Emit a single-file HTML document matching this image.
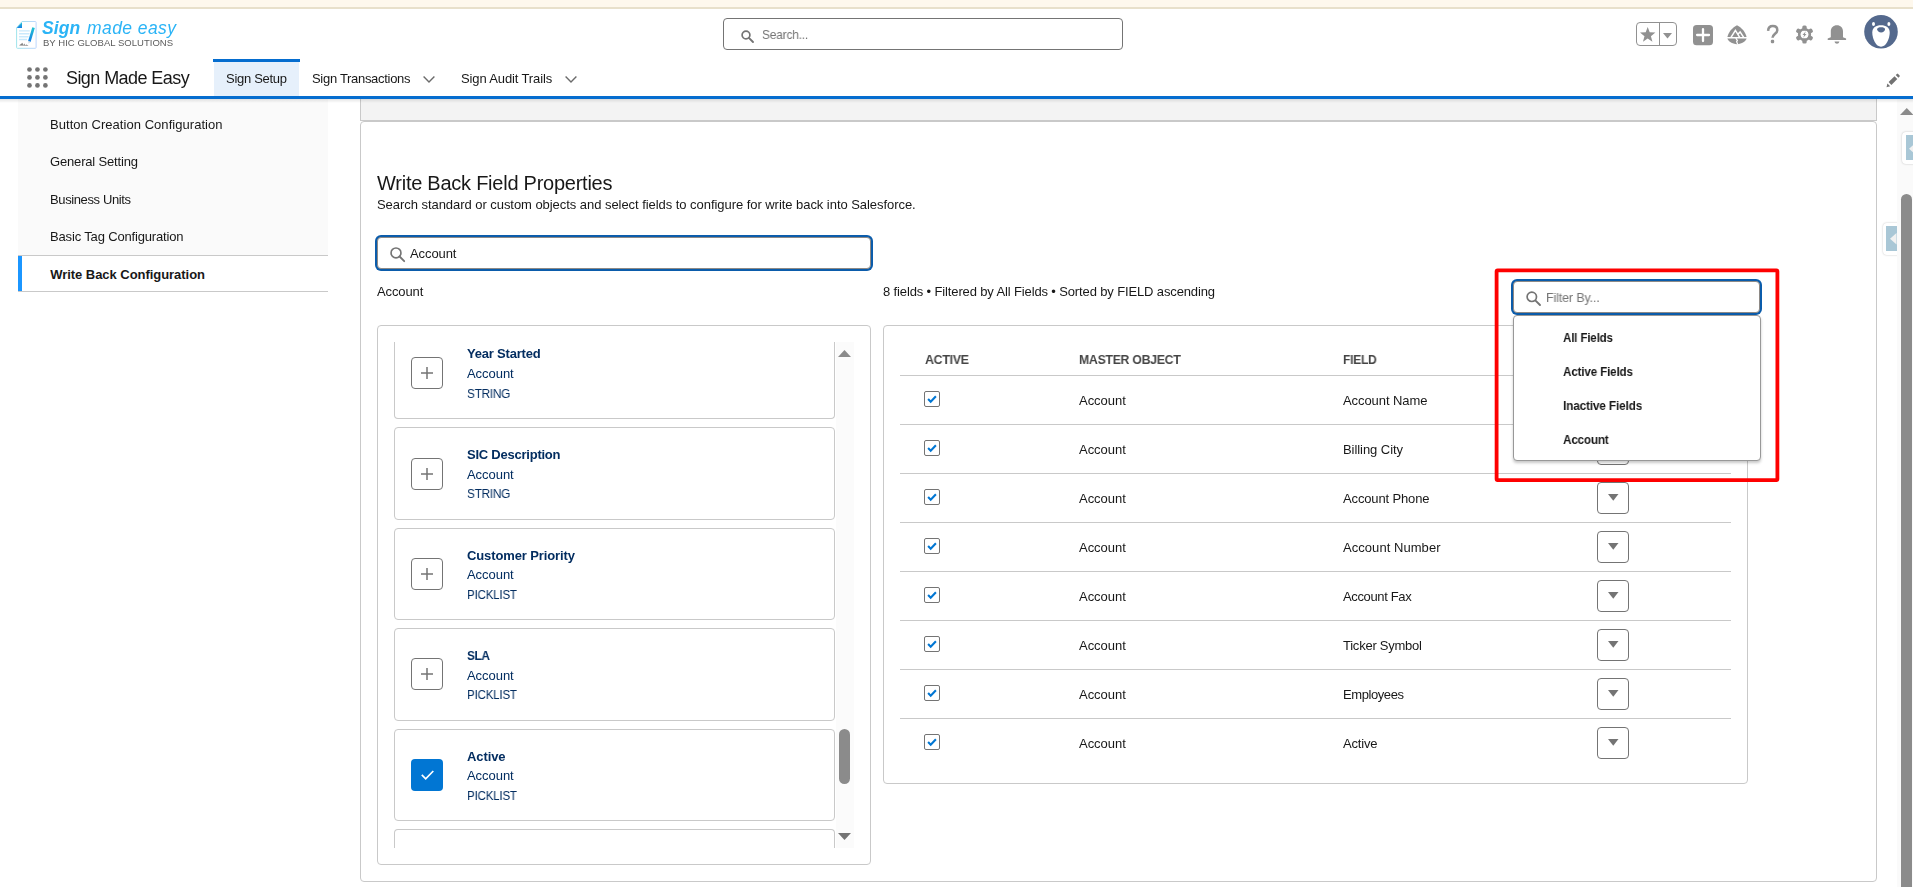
<!DOCTYPE html><html lang="en"><head><meta charset="utf-8"><title>Sign Made Easy</title><style>
*{box-sizing:border-box;margin:0;padding:0}
html,body{width:1913px;height:887px;overflow:hidden;background:#fff}
body{position:relative;font-family:"Liberation Sans",sans-serif;font-size:13px;color:#181818}
.a{position:absolute}
.t{position:absolute;white-space:nowrap;transform-origin:0 50%;display:block;font-weight:400;text-decoration:none;will-change:transform}
svg{position:absolute;overflow:visible}
.lcd{will-change:auto}
.card{position:absolute;left:394px;width:441px;height:92px;border:1px solid #c9c9c9;border-radius:4px;background:#fff}
.sq{position:absolute;width:32px;height:32px;border:1px solid #747474;border-radius:4px;background:#fff}
.ln{position:absolute;left:900px;width:831px;height:1px;background:#c9c9c9}
.cb{position:absolute;left:924px;width:16px;height:16px;border:1px solid #747474;border-radius:2px;background:#fff}
</style></head><body><div class="a" style="left:0;top:0;width:1913px;height:9px;background:#fef8ed;border-bottom:2px solid #e8e0cb"></div><header><svg style="left:15px;top:20px" width="23" height="30" viewBox="15 20 23 30">
<defs><linearGradient id="lg1" x1="0" y1="0" x2="0" y2="1"><stop offset="0" stop-color="#22c6d2"/><stop offset="1" stop-color="#167fe6"/></linearGradient>
<linearGradient id="lg2" x1="0" y1="0" x2="1" y2="0"><stop offset="0" stop-color="#9fe4ec"/><stop offset="1" stop-color="#bcd6fd"/></linearGradient></defs>
<path d="M22 21.500H35.300Q36.100 21.500 36.100 22.300V47.500Q36.100 48.300 35.300 48.300H17.400Q16.600 48.300 16.600 47.500V27.800Z" fill="#fff" stroke="url(#lg2)" stroke-width="1"/>
<path d="M16.700 28L22 22.200V28Z" fill="url(#lg1)"/>
<path d="M19 30.900H29.800M19 33.700H29.500M19 36.700H28.500M19 39.500H27" stroke="#c9e9fc" stroke-width="1.400"/>
<path d="M32.300 27.200L34.800 28L30.600 41.900L28.100 41.100Z" fill="url(#lg1)"/>
<path d="M28.100 41.100L30.600 41.900L28.500 43.800Z" fill="#d8dde2"/>
<path d="M19 45.600L22.500 42.800L23.200 45.200L24.300 43.500L25.200 45.300L26.500 44.600L28.600 45.700Z" fill="#5a5a5a" opacity=".75"/>
</svg><span class="t" style="left:41.60px;top:13px;font-size:17.5px;line-height:30px;color:#2bb4f6;font-weight:700;font-style:italic;letter-spacing:0.059px;">Sign</span><span class="t" style="left:86.60px;top:13px;font-size:17.5px;line-height:30px;color:#2bb4f6;font-style:italic;letter-spacing:0.424px;">made easy</span><span class="t" style="left:42.90px;top:33px;font-size:9.5px;line-height:20px;color:#5c5c5c;letter-spacing:0.034px;">BY HIC GLOBAL SOLUTIONS</span><div class="a" style="left:723px;top:18px;width:400px;height:32px;border:1px solid #747474;border-radius:4px;background:#fff"></div><svg style="left:740.5px;top:29.5px" width="13" height="13" viewBox="0 0 13 13"><circle cx="5" cy="5" r="3.9" fill="none" stroke="#747474" stroke-width="1.7"/><path d="M7.9 7.9L12 12" stroke="#747474" stroke-width="1.9" stroke-linecap="round"/></svg><span class="t" style="left:761.75px;top:25px;font-size:13px;line-height:20px;color:#747474;letter-spacing:-0.195px;transform:scaleX(0.9164);">Search...</span><div class="a" style="left:1636px;top:22px;width:41px;height:24px;border:1px solid #919191;border-radius:4px;background:#fff"></div><div class="a" style="left:1659px;top:22px;width:1px;height:24px;background:#919191"></div><svg style="left:1640.200px;top:27.400px" width="15.400" height="14.800" viewBox="0 0 24 23"><path d="M12 0l3.1 8.3 8.9.4-7 5.5 2.4 8.6L12 17.9 4.6 22.8 7 14.2 0 8.7l8.9-.4z" fill="#919191"/></svg><svg style="left:1663.300px;top:33.200px" width="9" height="5.600" viewBox="0 0 9 5.4"><path d="M0 0H9L4.5 5.4Z" fill="#919191"/></svg><svg style="left:1693px;top:25px" width="20" height="20" viewBox="0 0 20 20"><rect width="20" height="20.300" rx="3.600" fill="#919191"/><path d="M10 4.100V16.100M4.100 10H16" stroke="#fff" stroke-width="2.300" stroke-linecap="round"/></svg><svg style="left:1727px;top:24.500px" width="20" height="20" viewBox="0 0 20 20"><path d="M.4 12C1.400 7 5.500 2.400 10 .2C14.500 2.400 18.600 7 19.600 12Z" fill="#919191"/><path d="M.4 13.600H19.600C18.800 16.300 15 18.900 10 19.300C5 18.900 1.200 16.300 .4 13.600Z" fill="#919191"/><path d="M4 12.400L8.400 5.400L12.700 12.400M10.900 9.300L13.100 6.900L16.700 12.400" stroke="#fff" stroke-width="1.500" fill="none" stroke-linejoin="miter"/><path d="M8.800 13.200L10.400 15.600L9.600 16.700L10.800 19.600" stroke="#fff" stroke-width="1.200" fill="none"/></svg><svg style="left:1765.800px;top:25px" width="13" height="19" viewBox="0 0 13 19"><path d="M2.100 5.900C2.300 2.700 4.300 1.100 6.800 1.100C9.500 1.100 11.300 2.800 11.300 5.200C11.300 8.600 6.700 9 6.500 12.800" fill="none" stroke="#919191" stroke-width="2.500"/><rect x="4.800" y="14.800" width="3.400" height="3.400" rx="1.200" fill="#919191"/></svg><svg style="left:1795px;top:25.400px" width="19" height="19" viewBox="-9.500 -9.500 19 19"><circle r="5.300" fill="none" stroke="#919191" stroke-width="2.600"/><rect x="-2.200" y="-9.100" width="4.400" height="5" rx="1.500" transform="rotate(0)" fill="#919191"/><rect x="-2.200" y="-9.100" width="4.400" height="5" rx="1.500" transform="rotate(60)" fill="#919191"/><rect x="-2.200" y="-9.100" width="4.400" height="5" rx="1.500" transform="rotate(120)" fill="#919191"/><rect x="-2.200" y="-9.100" width="4.400" height="5" rx="1.500" transform="rotate(180)" fill="#919191"/><rect x="-2.200" y="-9.100" width="4.400" height="5" rx="1.500" transform="rotate(240)" fill="#919191"/><rect x="-2.200" y="-9.100" width="4.400" height="5" rx="1.500" transform="rotate(300)" fill="#919191"/><path d="M1.300-3.300L-2 .4H-.3L-1.300 3.300L2-.4H.3Z" fill="#919191"/></svg><svg style="left:1827px;top:24.500px" width="19.500" height="19.500" viewBox="0 0 19.500 19.500"><path d="M3.800 12.200V6.500C3.800 2.800 6.300 .3 9.900 .3C13.500 .3 16 2.800 16 6.500V12.200L19.100 13.600V14.900H.7V13.600Z" fill="#919191"/><path d="M7.500 16.500H12.400C12 18 11 18.700 9.950 18.700C8.900 18.700 7.900 18 7.500 16.500Z" fill="#919191"/></svg><svg style="left:1864px;top:15px" width="34" height="34" viewBox="0 0 34 34"><circle cx="17" cy="16.800" r="16.800" fill="#54698d"/><ellipse cx="9.500" cy="9.100" rx="1.500" ry="2" fill="#fff"/><ellipse cx="24.900" cy="9.100" rx="1.500" ry="2" fill="#fff"/><path d="M17 10.300C22 10.300 25.700 12.500 25.700 17.500C25.700 24 22 31.700 17 31.700C12 31.700 8.300 24 8.300 17.500C8.300 12.500 12 10.300 17 10.300Z" fill="#fff"/><path d="M13.200 14.200C13.200 12.700 15 12.200 17.100 12.200C19.200 12.200 21 12.700 21 14.200C21 16 19.200 17.600 17.100 17.600C15 17.600 13.200 16 13.200 14.200Z" fill="#54698d"/></svg></header><nav><div class="a" style="left:0;top:58px;width:1913px;height:41px;border-bottom:3px solid #056dcf;background:#fff"></div><svg style="left:27px;top:67px" width="21.200" height="21.200" viewBox="0 0 21.200 21.200" fill="#747474"><circle cx="2.50" cy="2.50" r="2.350"/><circle cx="10.45" cy="2.50" r="2.350"/><circle cx="18.40" cy="2.50" r="2.350"/><circle cx="2.50" cy="10.45" r="2.350"/><circle cx="10.45" cy="10.45" r="2.350"/><circle cx="18.40" cy="10.45" r="2.350"/><circle cx="2.50" cy="18.40" r="2.350"/><circle cx="10.45" cy="18.40" r="2.350"/><circle cx="18.40" cy="18.40" r="2.350"/></svg><span class="t" style="left:65.50px;top:63px;font-size:18px;line-height:30px;color:#181818;letter-spacing:-0.568px;">Sign Made Easy</span><div class="a" style="left:214px;top:62px;width:85px;height:34px;background:#e6f0fb"></div><div class="a" style="left:213px;top:59px;width:87px;height:3px;background:#056dcf"></div><a class="t" style="left:225.70px;top:69px;font-size:13px;line-height:20px;color:#181818;letter-spacing:-0.290px;">Sign Setup</a><a class="t" style="left:311.50px;top:69px;font-size:13px;line-height:20px;color:#181818;letter-spacing:-0.303px;">Sign Transactions</a><svg style="left:423px;top:76.300px" width="12" height="7" viewBox="0 0 12 7"><path d="M.6.600L6 6L11.400.600" fill="none" stroke="#6b6b6b" stroke-width="1.400"/></svg><a class="t" style="left:460.50px;top:69px;font-size:13px;line-height:20px;color:#181818;letter-spacing:-0.126px;">Sign Audit Trails</a><svg style="left:565px;top:76.300px" width="12" height="7" viewBox="0 0 12 7"><path d="M.6.600L6 6L11.400.600" fill="none" stroke="#6b6b6b" stroke-width="1.400"/></svg><svg style="left:1886px;top:72.500px" width="14.500" height="14.500" viewBox="0 0 14.500 14.500" fill="#727272"><path d="M.5 14.200L1.400 10.500L4.200 13.300Z"/><path d="M2.600 9.100L8.500 3.200L11.300 6L5.400 11.900Z"/><path d="M9.700 2.100L10.900 .9Q11.500 .3 12.100 .9L13.600 2.400Q14.200 3 13.600 3.600L12.400 4.800Z"/></svg></nav><aside><div class="a" style="left:18px;top:99px;width:310px;height:156px;background:#fafafa"></div><div class="a" style="left:18px;top:255px;width:310px;height:37px;background:#fff;border-top:1px solid #c9c9c9;border-bottom:1px solid #c9c9c9"></div><div class="a" style="left:18px;top:256px;width:4px;height:35px;background:#1b96ff"></div><a class="t" style="left:50.20px;top:115px;font-size:13px;line-height:20px;color:#181818;letter-spacing:0.044px;">Button Creation Configuration</a><a class="t" style="left:50.20px;top:152px;font-size:13px;line-height:20px;color:#181818;letter-spacing:-0.167px;">General Setting</a><a class="t" style="left:50.20px;top:190px;font-size:13px;line-height:20px;color:#181818;letter-spacing:-0.383px;">Business Units</a><a class="t" style="left:50.20px;top:227px;font-size:13px;line-height:20px;color:#181818;letter-spacing:-0.158px;">Basic Tag Configuration</a><a class="t lcd" style="left:50.20px;top:265px;font-size:13px;line-height:20px;color:#181818;font-weight:700;letter-spacing:-0.043px;">Write Back Configuration</a></aside><main><div class="a" style="left:360px;top:99px;width:1517px;height:22px;background:#f3f3f3;border:1px solid #c9c9c9;border-top:0"></div><section class="a" style="left:360px;top:121px;width:1517px;height:761px;border:1px solid #c9c9c9;border-radius:4px;background:#fff"></section><h2 class="t" style="left:376.75px;top:168px;font-size:20px;line-height:30px;color:#181818;letter-spacing:-0.248px;">Write Back Field Properties</h2><p class="t" style="left:376.75px;top:195px;font-size:13px;line-height:20px;color:#181818;letter-spacing:-0.049px;">Search standard or custom objects and select fields to configure for write back into Salesforce.</p><div class="a" style="left:377px;top:237px;width:494px;height:32px;border:1px solid #8e8a86;border-radius:4px;background:#fff;box-shadow:0 0 0 2px #0b5cab"></div><svg style="left:389.500px;top:246.600px" width="15" height="15" viewBox="0 0 15 15"><circle cx="6" cy="5.900" r="4.950" fill="none" stroke="#747474" stroke-width="1.600"/><path d="M9.600 9.500L14.200 14.200" stroke="#747474" stroke-width="1.800" stroke-linecap="round"/></svg><span class="t" style="left:409.50px;top:244px;font-size:13px;line-height:20px;color:#181818;letter-spacing:-0.081px;">Account</span><span class="t" style="left:376.75px;top:282px;font-size:13px;line-height:20px;color:#181818;letter-spacing:-0.114px;">Account</span><div class="a" style="left:377px;top:325px;width:494px;height:540px;border:1px solid #c9c9c9;border-radius:4px;background:#fff"></div><div class="a" style="left:835.500px;top:342px;width:18px;height:506px;background:#fbfbfb"></div><div class="a" style="left:394px;top:342px;width:441px;height:77px;border:1px solid #c9c9c9;border-top:0;border-radius:0 0 4px 4px;background:#fff"></div><div class="sq" style="left:411px;top:357px"></div><svg style="left:421px;top:367px" width="12" height="12" viewBox="0 0 12 12"><path d="M6 0V12M0 6H12" stroke="#747474" stroke-width="1.500"/></svg><span class="t" style="left:467.00px;top:344px;font-size:13px;line-height:20px;color:#032d60;font-weight:700;letter-spacing:-0.198px;">Year Started</span><span class="t" style="left:467.00px;top:364px;font-size:13px;line-height:20px;color:#032d60;letter-spacing:-0.047px;">Account</span><span class="t" style="left:467.00px;top:384px;font-size:13px;line-height:20px;color:#032d60;letter-spacing:-0.295px;transform:scaleX(0.9087);">STRING</span><div class="card" style="top:427px;height:93px"></div><div class="sq" style="left:411px;top:458px"></div><svg style="left:421px;top:468px" width="12" height="12" viewBox="0 0 12 12"><path d="M6 0V12M0 6H12" stroke="#747474" stroke-width="1.500"/></svg><span class="t" style="left:467.00px;top:445px;font-size:13px;line-height:20px;color:#032d60;font-weight:700;letter-spacing:-0.235px;">SIC Description</span><span class="t" style="left:467.00px;top:465px;font-size:13px;line-height:20px;color:#032d60;letter-spacing:-0.047px;">Account</span><span class="t" style="left:467.00px;top:484px;font-size:13px;line-height:20px;color:#032d60;letter-spacing:-0.295px;transform:scaleX(0.9087);">STRING</span><div class="card" style="top:528px;height:92px"></div><div class="sq" style="left:411px;top:558px"></div><svg style="left:421px;top:568px" width="12" height="12" viewBox="0 0 12 12"><path d="M6 0V12M0 6H12" stroke="#747474" stroke-width="1.500"/></svg><span class="t" style="left:467.00px;top:546px;font-size:13px;line-height:20px;color:#032d60;font-weight:700;letter-spacing:-0.113px;">Customer Priority</span><span class="t" style="left:467.00px;top:565px;font-size:13px;line-height:20px;color:#032d60;letter-spacing:-0.047px;">Account</span><span class="t" style="left:467.00px;top:585px;font-size:13px;line-height:20px;color:#032d60;letter-spacing:-0.248px;transform:scaleX(0.8919);">PICKLIST</span><div class="card" style="top:628px;height:93px"></div><div class="sq" style="left:411px;top:658px"></div><svg style="left:421px;top:668px" width="12" height="12" viewBox="0 0 12 12"><path d="M6 0V12M0 6H12" stroke="#747474" stroke-width="1.500"/></svg><span class="t" style="left:467.00px;top:646px;font-size:13px;line-height:20px;color:#032d60;font-weight:700;letter-spacing:-0.390px;transform:scaleX(0.9120);">SLA</span><span class="t" style="left:467.00px;top:666px;font-size:13px;line-height:20px;color:#032d60;letter-spacing:-0.047px;">Account</span><span class="t" style="left:467.00px;top:685px;font-size:13px;line-height:20px;color:#032d60;letter-spacing:-0.248px;transform:scaleX(0.8919);">PICKLIST</span><div class="card" style="top:729px;height:92px"></div><div class="a" style="left:411px;top:759px;width:32px;height:32px;border-radius:4px;background:#0176d3"></div><svg style="left:420.500px;top:770px" width="13" height="10.500" viewBox="0 0 13 10.500"><path d="M.8 4.800L4.700 8.800L12.300 1" fill="none" stroke="#fff" stroke-width="1.700"/></svg><span class="t" style="left:467.00px;top:747px;font-size:13px;line-height:20px;color:#032d60;font-weight:700;letter-spacing:-0.106px;">Active</span><span class="t" style="left:467.00px;top:766px;font-size:13px;line-height:20px;color:#032d60;letter-spacing:-0.047px;">Account</span><span class="t" style="left:467.00px;top:786px;font-size:13px;line-height:20px;color:#032d60;letter-spacing:-0.248px;transform:scaleX(0.8919);">PICKLIST</span><div class="a" style="left:394px;top:829px;width:441px;height:19px;border:1px solid #c9c9c9;border-bottom:0;border-radius:4px 4px 0 0;background:#fff"></div><svg style="left:837.500px;top:350px" width="13" height="7" viewBox="0 0 13 7"><path d="M0 7H13L6.500 0Z" fill="#8b8b8b"/></svg><svg style="left:837.800px;top:833px" width="13" height="7" viewBox="0 0 13 7"><path d="M0 0H13L6.500 7Z" fill="#747474"/></svg><div class="a" style="left:839px;top:729px;width:11px;height:55px;border-radius:5.500px;background:#8b8b8b"></div><span class="t" style="left:883.00px;top:282px;font-size:13px;line-height:20px;color:#181818;letter-spacing:-0.134px;">8 fields • Filtered by All Fields • Sorted by FIELD ascending</span><div class="a" style="left:883px;top:325px;width:865px;height:459px;border:1px solid #c9c9c9;border-radius:4px;background:#fff"></div><span class="t" style="left:924.50px;top:350px;font-size:13px;line-height:20px;color:#444;font-weight:700;letter-spacing:-0.286px;transform:scaleX(0.9515);">ACTIVE</span><span class="t" style="left:1078.75px;top:350px;font-size:13px;line-height:20px;color:#444;font-weight:700;letter-spacing:-0.278px;transform:scaleX(0.9430);">MASTER OBJECT</span><span class="t" style="left:1342.50px;top:350px;font-size:13px;line-height:20px;color:#444;font-weight:700;letter-spacing:-0.282px;transform:scaleX(0.9263);">FIELD</span><div class="ln" style="top:375px"></div><div class="cb" style="top:391px"></div><svg style="left:927px;top:395.2px" width="10" height="8" viewBox="0 0 10 8"><path d="M1.100 4.100L3.700 6.700L8.900 1.300" fill="none" stroke="#0176d3" stroke-width="2.100"/></svg><span class="t" style="left:1078.75px;top:391px;font-size:13px;line-height:20px;color:#181818;letter-spacing:-0.039px;">Account</span><span class="t" style="left:1342.50px;top:391px;font-size:13px;line-height:20px;color:#181818;letter-spacing:-0.070px;">Account Name</span><div class="sq" style="left:1597px;top:384px"></div><svg style="left:1607.500px;top:396.4px" width="10.500" height="6.700" viewBox="0 0 10.500 6.700"><path d="M0 0H10.500L5.250 6.700Z" fill="#747474"/></svg><div class="ln" style="top:424px"></div><div class="cb" style="top:440px"></div><svg style="left:927px;top:444.2px" width="10" height="8" viewBox="0 0 10 8"><path d="M1.100 4.100L3.700 6.700L8.900 1.300" fill="none" stroke="#0176d3" stroke-width="2.100"/></svg><span class="t" style="left:1078.75px;top:440px;font-size:13px;line-height:20px;color:#181818;letter-spacing:-0.039px;">Account</span><span class="t" style="left:1342.50px;top:440px;font-size:13px;line-height:20px;color:#181818;letter-spacing:-0.062px;">Billing City</span><div class="sq" style="left:1597px;top:433px"></div><svg style="left:1607.500px;top:445.4px" width="10.500" height="6.700" viewBox="0 0 10.500 6.700"><path d="M0 0H10.500L5.250 6.700Z" fill="#747474"/></svg><div class="ln" style="top:473px"></div><div class="cb" style="top:489px"></div><svg style="left:927px;top:493.2px" width="10" height="8" viewBox="0 0 10 8"><path d="M1.100 4.100L3.700 6.700L8.900 1.300" fill="none" stroke="#0176d3" stroke-width="2.100"/></svg><span class="t" style="left:1078.75px;top:489px;font-size:13px;line-height:20px;color:#181818;letter-spacing:-0.039px;">Account</span><span class="t" style="left:1342.50px;top:489px;font-size:13px;line-height:20px;color:#181818;letter-spacing:-0.141px;">Account Phone</span><div class="sq" style="left:1597px;top:482px"></div><svg style="left:1607.500px;top:494.4px" width="10.500" height="6.700" viewBox="0 0 10.500 6.700"><path d="M0 0H10.500L5.250 6.700Z" fill="#747474"/></svg><div class="ln" style="top:522px"></div><div class="cb" style="top:538px"></div><svg style="left:927px;top:542.2px" width="10" height="8" viewBox="0 0 10 8"><path d="M1.100 4.100L3.700 6.700L8.900 1.300" fill="none" stroke="#0176d3" stroke-width="2.100"/></svg><span class="t" style="left:1078.75px;top:538px;font-size:13px;line-height:20px;color:#181818;letter-spacing:-0.039px;">Account</span><span class="t" style="left:1342.50px;top:538px;font-size:13px;line-height:20px;color:#181818;letter-spacing:0.052px;">Account Number</span><div class="sq" style="left:1597px;top:531px"></div><svg style="left:1607.500px;top:543.4px" width="10.500" height="6.700" viewBox="0 0 10.500 6.700"><path d="M0 0H10.500L5.250 6.700Z" fill="#747474"/></svg><div class="ln" style="top:571px"></div><div class="cb" style="top:587px"></div><svg style="left:927px;top:591.2px" width="10" height="8" viewBox="0 0 10 8"><path d="M1.100 4.100L3.700 6.700L8.900 1.300" fill="none" stroke="#0176d3" stroke-width="2.100"/></svg><span class="t" style="left:1078.75px;top:587px;font-size:13px;line-height:20px;color:#181818;letter-spacing:-0.039px;">Account</span><span class="t" style="left:1342.50px;top:587px;font-size:13px;line-height:20px;color:#181818;letter-spacing:-0.352px;">Account Fax</span><div class="sq" style="left:1597px;top:580px"></div><svg style="left:1607.500px;top:592.4px" width="10.500" height="6.700" viewBox="0 0 10.500 6.700"><path d="M0 0H10.500L5.250 6.700Z" fill="#747474"/></svg><div class="ln" style="top:620px"></div><div class="cb" style="top:636px"></div><svg style="left:927px;top:640.2px" width="10" height="8" viewBox="0 0 10 8"><path d="M1.100 4.100L3.700 6.700L8.900 1.300" fill="none" stroke="#0176d3" stroke-width="2.100"/></svg><span class="t" style="left:1078.75px;top:636px;font-size:13px;line-height:20px;color:#181818;letter-spacing:-0.039px;">Account</span><span class="t" style="left:1342.50px;top:636px;font-size:13px;line-height:20px;color:#181818;letter-spacing:-0.240px;">Ticker Symbol</span><div class="sq" style="left:1597px;top:629px"></div><svg style="left:1607.500px;top:641.4px" width="10.500" height="6.700" viewBox="0 0 10.500 6.700"><path d="M0 0H10.500L5.250 6.700Z" fill="#747474"/></svg><div class="ln" style="top:669px"></div><div class="cb" style="top:685px"></div><svg style="left:927px;top:689.2px" width="10" height="8" viewBox="0 0 10 8"><path d="M1.100 4.100L3.700 6.700L8.900 1.300" fill="none" stroke="#0176d3" stroke-width="2.100"/></svg><span class="t" style="left:1078.75px;top:685px;font-size:13px;line-height:20px;color:#181818;letter-spacing:-0.039px;">Account</span><span class="t" style="left:1342.50px;top:685px;font-size:13px;line-height:20px;color:#181818;letter-spacing:-0.414px;">Employees</span><div class="sq" style="left:1597px;top:678px"></div><svg style="left:1607.500px;top:690.4px" width="10.500" height="6.700" viewBox="0 0 10.500 6.700"><path d="M0 0H10.500L5.250 6.700Z" fill="#747474"/></svg><div class="ln" style="top:718px"></div><div class="cb" style="top:734px"></div><svg style="left:927px;top:738.2px" width="10" height="8" viewBox="0 0 10 8"><path d="M1.100 4.100L3.700 6.700L8.900 1.300" fill="none" stroke="#0176d3" stroke-width="2.100"/></svg><span class="t" style="left:1078.75px;top:734px;font-size:13px;line-height:20px;color:#181818;letter-spacing:-0.039px;">Account</span><span class="t" style="left:1342.50px;top:734px;font-size:13px;line-height:20px;color:#181818;letter-spacing:-0.181px;">Active</span><div class="sq" style="left:1597px;top:727px"></div><svg style="left:1607.500px;top:739.4px" width="10.500" height="6.700" viewBox="0 0 10.500 6.700"><path d="M0 0H10.500L5.250 6.700Z" fill="#747474"/></svg><div class="a" style="left:1513px;top:281px;width:247px;height:32px;border:1px solid #8e8a86;border-radius:4px;background:#fff;box-shadow:0 0 0 2px #0b5cab"></div><svg style="left:1525.500px;top:290.500px" width="15" height="15" viewBox="0 0 15 15"><circle cx="5.800" cy="5.800" r="4.700" fill="none" stroke="#747474" stroke-width="1.700"/><path d="M9.300 9.300L14 14" stroke="#747474" stroke-width="1.900" stroke-linecap="round"/></svg><span class="t" style="left:1546.25px;top:288px;font-size:13px;line-height:20px;color:#747474;letter-spacing:-0.157px;transform:scaleX(0.9629);">Filter By...</span><div class="a" style="left:1513px;top:315px;width:247.500px;height:146px;border:1px solid #989898;border-radius:4px;background:#fff;box-shadow:0 2px 3px rgba(0,0,0,.22)"></div><span class="t" style="left:1562.50px;top:328px;font-size:13px;line-height:20px;color:#181818;font-weight:700;letter-spacing:-0.193px;transform:scaleX(0.8919);">All Fields</span><span class="t" style="left:1562.50px;top:362px;font-size:13px;line-height:20px;color:#181818;font-weight:700;letter-spacing:-0.201px;transform:scaleX(0.8998);">Active Fields</span><span class="t" style="left:1562.50px;top:396px;font-size:13px;line-height:20px;color:#181818;font-weight:700;letter-spacing:-0.192px;transform:scaleX(0.9119);">Inactive Fields</span><span class="t" style="left:1562.50px;top:430px;font-size:13px;line-height:20px;color:#181818;font-weight:700;letter-spacing:-0.260px;transform:scaleX(0.9070);">Account</span><svg style="left:1490px;top:264px" width="294" height="222" viewBox="1490 264 294 222"><rect x="1496.600" y="270.300" width="280.800" height="209.800" rx="1" fill="none" stroke="#fe0000" stroke-width="3.800"/></svg></main><div class="a" style="left:1897px;top:99px;width:16px;height:788px;background:#fafafa"></div><svg style="left:1900px;top:108px" width="13.500" height="7" viewBox="0 0 13.500 7"><path d="M0 7H13.500L6.750 0Z" fill="#8b8b8b"/></svg><div class="a" style="left:1901px;top:194px;width:11px;height:720px;border-radius:5.500px;background:#8b8b8b"></div><div class="a" style="left:1902px;top:131.500px;width:20px;height:32px;border-radius:4px;background:#fff;box-shadow:0 0 2px rgba(0,0,0,.25)"></div><div class="a" style="left:1906px;top:135px;width:10px;height:25px;background:#a9c7d6"></div><svg style="left:1908.800px;top:142.500px" width="6.500" height="11.500" viewBox="0 0 6.500 11.500"><path d="M6.500 0V11.500L0 5.750Z" fill="#f1f1f1"/></svg><div class="a" style="left:1882.500px;top:222.500px;width:20px;height:32.500px;border-radius:4px 0 0 4px;background:#fff;box-shadow:0 0 2px rgba(0,0,0,.25);clip-path:inset(-3px 5.500px -3px -3px)"></div><div class="a" style="left:1886px;top:226.200px;width:11px;height:24.600px;background:#a9c7d6"></div><svg style="left:1889.500px;top:232.700px" width="6.500" height="11.500" viewBox="0 0 6.500 11.500"><path d="M6.500 0V11.500L0 5.750Z" fill="#f1f1f1"/></svg><div class="a" style="left:0;top:99px;width:1913px;height:4px;background:linear-gradient(rgba(0,0,0,.10),rgba(0,0,0,0))"></div></body></html>
